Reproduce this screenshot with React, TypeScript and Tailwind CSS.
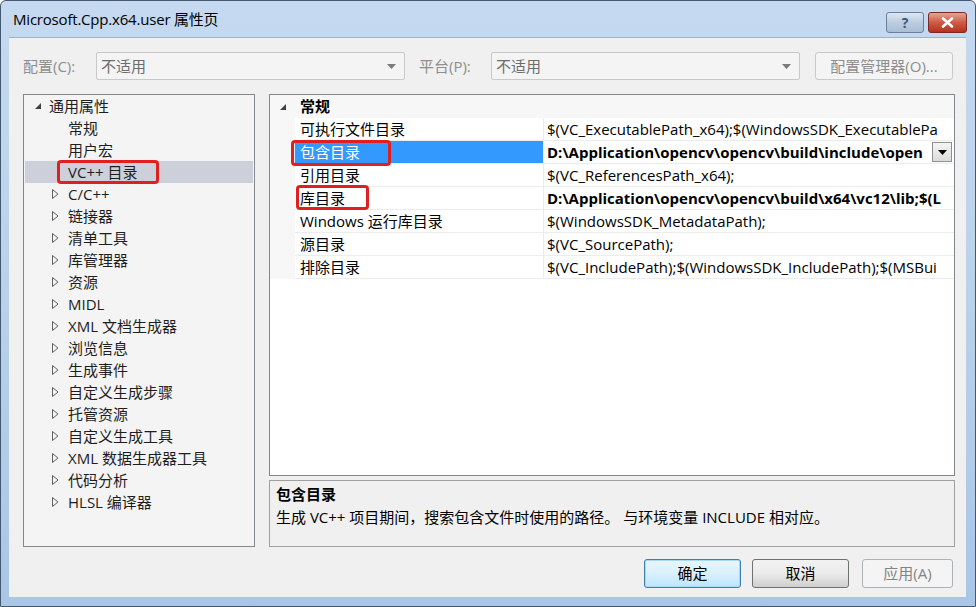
import React from 'react';

const UI = "font-['Open_Sans','Noto_Sans_CJK_SC',sans-serif]";

const treeItems: { label: string; kind: 'leaf' | 'closed' }[] = [
  { label: '常规', kind: 'leaf' },
  { label: '用户宏', kind: 'leaf' },
  { label: 'VC++ 目录', kind: 'leaf' },
  { label: 'C/C++', kind: 'closed' },
  { label: '链接器', kind: 'closed' },
  { label: '清单工具', kind: 'closed' },
  { label: '库管理器', kind: 'closed' },
  { label: '资源', kind: 'closed' },
  { label: 'MIDL', kind: 'closed' },
  { label: 'XML 文档生成器', kind: 'closed' },
  { label: '浏览信息', kind: 'closed' },
  { label: '生成事件', kind: 'closed' },
  { label: '自定义生成步骤', kind: 'closed' },
  { label: '托管资源', kind: 'closed' },
  { label: '自定义生成工具', kind: 'closed' },
  { label: 'XML 数据生成器工具', kind: 'closed' },
  { label: '代码分析', kind: 'closed' },
  { label: 'HLSL 编译器', kind: 'closed' },
];

// values as far as the column shows them
const gridRows: { name: string; value: string; bold?: boolean; selected?: boolean; dropdown?: boolean }[] = [
  { name: '可执行文件目录', value: '$(VC_ExecutablePath_x64);$(WindowsSDK_ExecutablePa' },
  { name: '包含目录', value: 'D:\\Application\\opencv\\opencv\\build\\include\\open', bold: true, selected: true, dropdown: true },
  { name: '引用目录', value: '$(VC_ReferencesPath_x64);' },
  { name: '库目录', value: 'D:\\Application\\opencv\\opencv\\build\\x64\\vc12\\lib;$(L', bold: true },
  { name: 'Windows 运行库目录', value: '$(WindowsSDK_MetadataPath);' },
  { name: '源目录', value: '$(VC_SourcePath);' },
  { name: '排除目录', value: '$(VC_IncludePath);$(WindowsSDK_IncludePath);$(MSBui' },
];

function ExpandedArrow() {
  return (
    <svg width="8" height="8" viewBox="0 0 8 8">
      <path d="M7 1 L7 7 L1 7 Z" fill="#404040" />
    </svg>
  );
}

function CollapsedArrow() {
  return (
    <svg width="7" height="10" viewBox="0 0 7 10">
      <path d="M0.5 0.5 L6 5 L0.5 9.5 Z" fill="none" stroke="#606060" strokeWidth="1" />
    </svg>
  );
}

function ComboArrow({ color = '#7a7a7a' }: { color?: string }) {
  return (
    <svg width="9" height="5" viewBox="0 0 9 5">
      <path d="M0 0 L9 0 L4.5 5 Z" fill={color} />
    </svg>
  );
}

function Combo() {
  return (
    <div className="w-[309px] shrink-0 h-[28px] flex items-center justify-between border border-[#c9c9c9] rounded-[2px] bg-[#f4f4f4] pl-[4px] pr-[8px] text-[15px] text-[#6d6d6d]">
      <span>不适用</span>
      <ComboArrow />
    </div>
  );
}

export default function App() {
  return (
    <div className={`w-[976px] h-[607px] bg-white ${UI}`}>
      <div className="relative w-[976px] h-[607px] flex flex-col rounded-t-[6px] border border-[#44586f] bg-gradient-to-b from-[#c5daf0] via-[#b9d1ea] to-[#aac6e6] pl-[8px] pr-[9px] pb-[9px]">
        {/* title bar */}
        <div className="h-[36px] flex items-center justify-between">
          <span className="pl-[4px] text-[15px] tracking-[-0.2px] text-black">Microsoft.Cpp.x64.user 属性页</span>
          <div className="flex gap-[4px] self-start mt-[11px] -mr-[1px]">
            <div className="w-[38px] h-[21px] flex items-center justify-center rounded-[3px] border border-[#6d7f96] bg-gradient-to-b from-[#dbe6f2] via-[#bccde1] to-[#a9bdd6] text-[14px] font-bold text-[#3d5572] leading-none">
              ?
            </div>
            <div className="w-[39px] h-[21px] flex items-center justify-center rounded-[3px] border border-[#7a2a21] bg-gradient-to-b from-[#e3a396] via-[#cd5a45] to-[#b7301d]">
              <svg width="13" height="11" viewBox="0 0 13 11">
                <path d="M2 1.5 L11 9.5 M11 1.5 L2 9.5" stroke="#ffffff" strokeWidth="2.6" strokeLinecap="round" />
              </svg>
            </div>
          </div>
        </div>

        {/* client area */}
        <div className="flex-1 flex flex-col bg-[#f0f0f0] border-t border-[#9db3cc] pl-[14px] pr-[11px] pt-[14px]">
          {/* config row */}
          <div className="h-[28px] flex items-center text-[15px] text-[#8d8d8d]">
            <span className="w-[73px] shrink-0">配置(C):</span>
            <Combo />
            <span className="ml-[14px] w-[72px] shrink-0">平台(P):</span>
            <Combo />
            <div className="ml-[15px] w-[138px] shrink-0 h-[28px] flex items-center justify-center border border-[#c9c9c9] rounded-[3px] bg-[#f4f4f4] text-[#8d8d8d]">
              配置管理器(O)...
            </div>
          </div>

          {/* main area */}
          <div className="mt-[14px] h-[453px] flex gap-[14px]">
            {/* tree */}
            <div className="w-[232px] shrink-0 h-full border border-[#828790] bg-[#f4f4f4] flex flex-col text-[15px] text-[#1e1e1e]">
              <div className="h-[22px] flex items-center">
                <div className="w-[25px] flex justify-end pr-[7px]">
                  <ExpandedArrow />
                </div>
                <span className="whitespace-nowrap">通用属性</span>
              </div>
              {treeItems.map((it) => (
                <div
                  key={it.label}
                  className={`relative h-[22px] flex items-center mx-[1px] ${it.label === 'VC++ 目录' ? 'bg-[#cdd0db]' : ''}`}
                >
                  <div className="w-[43px] shrink-0 flex justify-end pr-[9px]">
                    {it.kind === 'closed' && <CollapsedArrow />}
                  </div>
                  <span className="whitespace-nowrap">{it.label}</span>
                  {it.label === 'VC++ 目录' && (
                    <div className="absolute left-[32px] top-[-1px] w-[102px] h-[24px] rounded-[4px] border-[3px] border-[#e02020]" />
                  )}
                </div>
              ))}
            </div>

            {/* right column */}
            <div className="flex-1 min-w-0 flex flex-col gap-[4px]">
              {/* property grid */}
              <div className="relative h-[382px] border border-[#828790] bg-white flex flex-col overflow-hidden text-[15px] text-black">
                <div className="h-[23px] flex items-center bg-[#f7f7f7]">
                  <div className="w-[25px] flex justify-end pr-[8px]">
                    <ExpandedArrow />
                  </div>
                  <span className="pl-[5px] font-bold">常规</span>
                </div>
                {gridRows.map((r) => (
                  <div key={r.name} className="h-[23px] flex">
                    <div className="w-[25px] shrink-0 bg-[#f7f7f7]" />
                    <div
                      className={`w-[249px] shrink-0 flex items-center pl-[5px] border-b border-r border-[#ececec] whitespace-nowrap ${r.selected ? 'bg-[#3399ff] text-white' : ''}`}
                    >
                      {r.name}
                    </div>
                    <div className="relative flex-1 min-w-0 flex items-center pl-[3px] border-b border-[#ececec] overflow-hidden">
                      <span className={`whitespace-nowrap ${r.bold ? 'font-bold' : ''}`}>{r.value}</span>
                      {r.dropdown && (
                        <div className="absolute right-[2px] top-[1px] w-[20px] h-[20px] flex items-center justify-center border border-[#8f8f8f] bg-gradient-to-b from-[#f5f5f5] to-[#dcdcdc]">
                          <ComboArrow color="#000" />
                        </div>
                      )}
                    </div>
                  </div>
                ))}
                {/* annotation boxes */}
                <div className="absolute left-[21px] top-[45px] w-[100px] h-[26px] rounded-[4px] border-[3px] border-[#e02020]" />
                <div className="absolute left-[26px] top-[90px] w-[73px] h-[25px] rounded-[4px] border-[3px] border-[#e02020]" />
              </div>

              {/* description */}
              <div className="h-[67px] border border-[#a0a0a0] bg-[#f0f0f0] pl-[6px] pt-[2px] text-[15px] text-black">
                <div className="h-[22px] flex items-center font-bold">包含目录</div>
                <div className="h-[24px] flex items-center whitespace-nowrap">生成 VC++ 项目期间，搜索包含文件时使用的路径。 与环境变量 INCLUDE 相对应。</div>
              </div>
            </div>
          </div>

          {/* buttons */}
          <div className="mt-[12px] flex justify-end pr-[2px] text-[15px]">
            <div className="w-[97px] h-[29px] flex items-center justify-center rounded-[3px] border border-[#3c7fb1] bg-gradient-to-b from-[#eaf6fd] via-[#d9f0fc] to-[#bee6fd] shadow-[inset_0_0_0_1px_#a7d9f5] text-black">
              确定
            </div>
            <div className="ml-[11px] w-[97px] h-[29px] flex items-center justify-center rounded-[3px] border border-[#707070] bg-gradient-to-b from-[#f2f2f2] via-[#ebebeb] to-[#cfcfcf] text-black">
              取消
            </div>
            <div className="ml-[13px] w-[91px] h-[29px] flex items-center justify-center rounded-[3px] border border-[#adb2b5] bg-[#f4f4f4] text-[#838383]">
              应用(A)
            </div>
          </div>
        </div>
      </div>
    </div>
  );
}
